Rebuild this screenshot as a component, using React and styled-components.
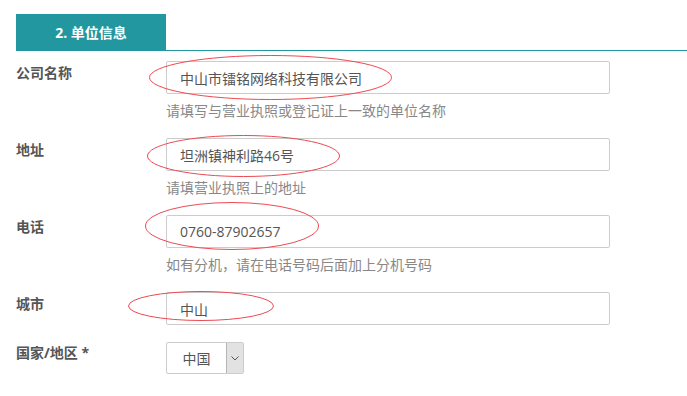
import React from "react";
import styled, { createGlobalStyle } from "styled-components";

const GlobalStyle = createGlobalStyle`
  html, body {
    margin: 0;
    padding: 0;
    background: #fff;
  }
  body {
    font-family: "Microsoft YaHei", "Open Sans", "Noto Sans CJK SC", sans-serif;
    font-size: 14px;
    color: #555;
  }
`;

const Page = styled.div`
  padding: 14px 0 0 16px;
`;

const Header = styled.div`
  display: flex;
  border-bottom: 1px solid #23979f;
  margin-bottom: 10px;
`;

const Tab = styled.div`
  width: 150px;
  height: 36px;
  background: #23979f;
  color: #fff;
  font-weight: bold;
  font-size: 14px;
  display: flex;
  align-items: center;
  justify-content: center;
`;

const Row = styled.div`
  display: grid;
  grid-template-columns: 150px 444px;
  margin-bottom: 17px;
`;

const Label = styled.div`
  font-weight: bold;
  color: #555;
  line-height: 20px;
  padding-top: ${(p) => p.$offset || 2}px;
`;

const Field = styled.div`
  position: relative;
`;

const Input = styled.div`
  box-sizing: border-box;
  height: 33px;
  border: 1px solid #ccc;
  border-radius: 2px;
  padding-left: 13px;
  display: flex;
  align-items: center;
  color: #555;
  font-size: 14px;
`;

const Hint = styled.div`
  padding-top: 7px;
  line-height: 20px;
  color: #888;
  font-size: 14px;
`;

const Select = styled.div`
  box-sizing: border-box;
  width: 78px;
  height: 32px;
  border: 1px solid #ccc;
  border-radius: 2px;
  display: flex;
`;

const SelectValue = styled.div`
  flex: 1;
  display: flex;
  align-items: center;
  justify-content: center;
  color: #555;
`;

const SelectArrow = styled.div`
  width: 16px;
  background: #e2e2e2;
  border-left: 1px solid #b5b5b5;
  display: flex;
  align-items: center;
  justify-content: center;
`;

const Mark = styled.svg`
  position: absolute;
  left: ${(p) => p.$x}px;
  top: ${(p) => p.$y}px;
  overflow: visible;
  pointer-events: none;
`;

function Circle({ x, y, w, h }) {
  return (
    <Mark $x={x} $y={y} width={w} height={h}>
      <ellipse
        cx={w / 2}
        cy={h / 2}
        rx={w / 2 - 0.5}
        ry={h / 2 - 0.5}
        fill="none"
        stroke="#ec4a52"
        strokeWidth="1"
      />
    </Mark>
  );
}

const rows = [
  {
    label: "公司名称",
    value: "中山市镭铭网络科技有限公司",
    hint: "请填写与营业执照或登记证上一致的单位名称",
    mark: { x: -17, y: -6, w: 243, h: 45 },
  },
  {
    label: "地址",
    value: "坦洲镇神利路46号",
    hint: "请填营业执照上的地址",
    mark: { x: -19, y: -3, w: 193, h: 42 },
  },
  {
    label: "电话",
    value: "0760-87902657",
    hint: "如有分机，请在电话号码后面加上分机号码",
    mark: { x: -21, y: -13, w: 174, h: 48 },
  },
  {
    label: "城市",
    value: "中山",
    mark: { x: -38, y: -1, w: 146, h: 30 },
  },
];

export default function App() {
  return (
    <>
      <GlobalStyle />
      <Page>
        <Header>
          <Tab>2. 单位信息</Tab>
        </Header>
        {rows.map((r) => (
          <Row key={r.label}>
            <Label>{r.label}</Label>
            <Field>
              <Input>{r.value}</Input>
              {r.hint && <Hint>{r.hint}</Hint>}
              <Circle {...r.mark} />
            </Field>
          </Row>
        ))}
        <Row>
          <Label $offset={1}>国家/地区 *</Label>
          <Field>
            <Select>
              <SelectValue>中国</SelectValue>
              <SelectArrow>
                <svg width="8" height="5" viewBox="0 0 8 5">
                  <path d="M0.5 0.5 L4 4 L7.5 0.5" fill="none" stroke="#555" strokeWidth="1" />
                </svg>
              </SelectArrow>
            </Select>
          </Field>
        </Row>
      </Page>
    </>
  );
}
